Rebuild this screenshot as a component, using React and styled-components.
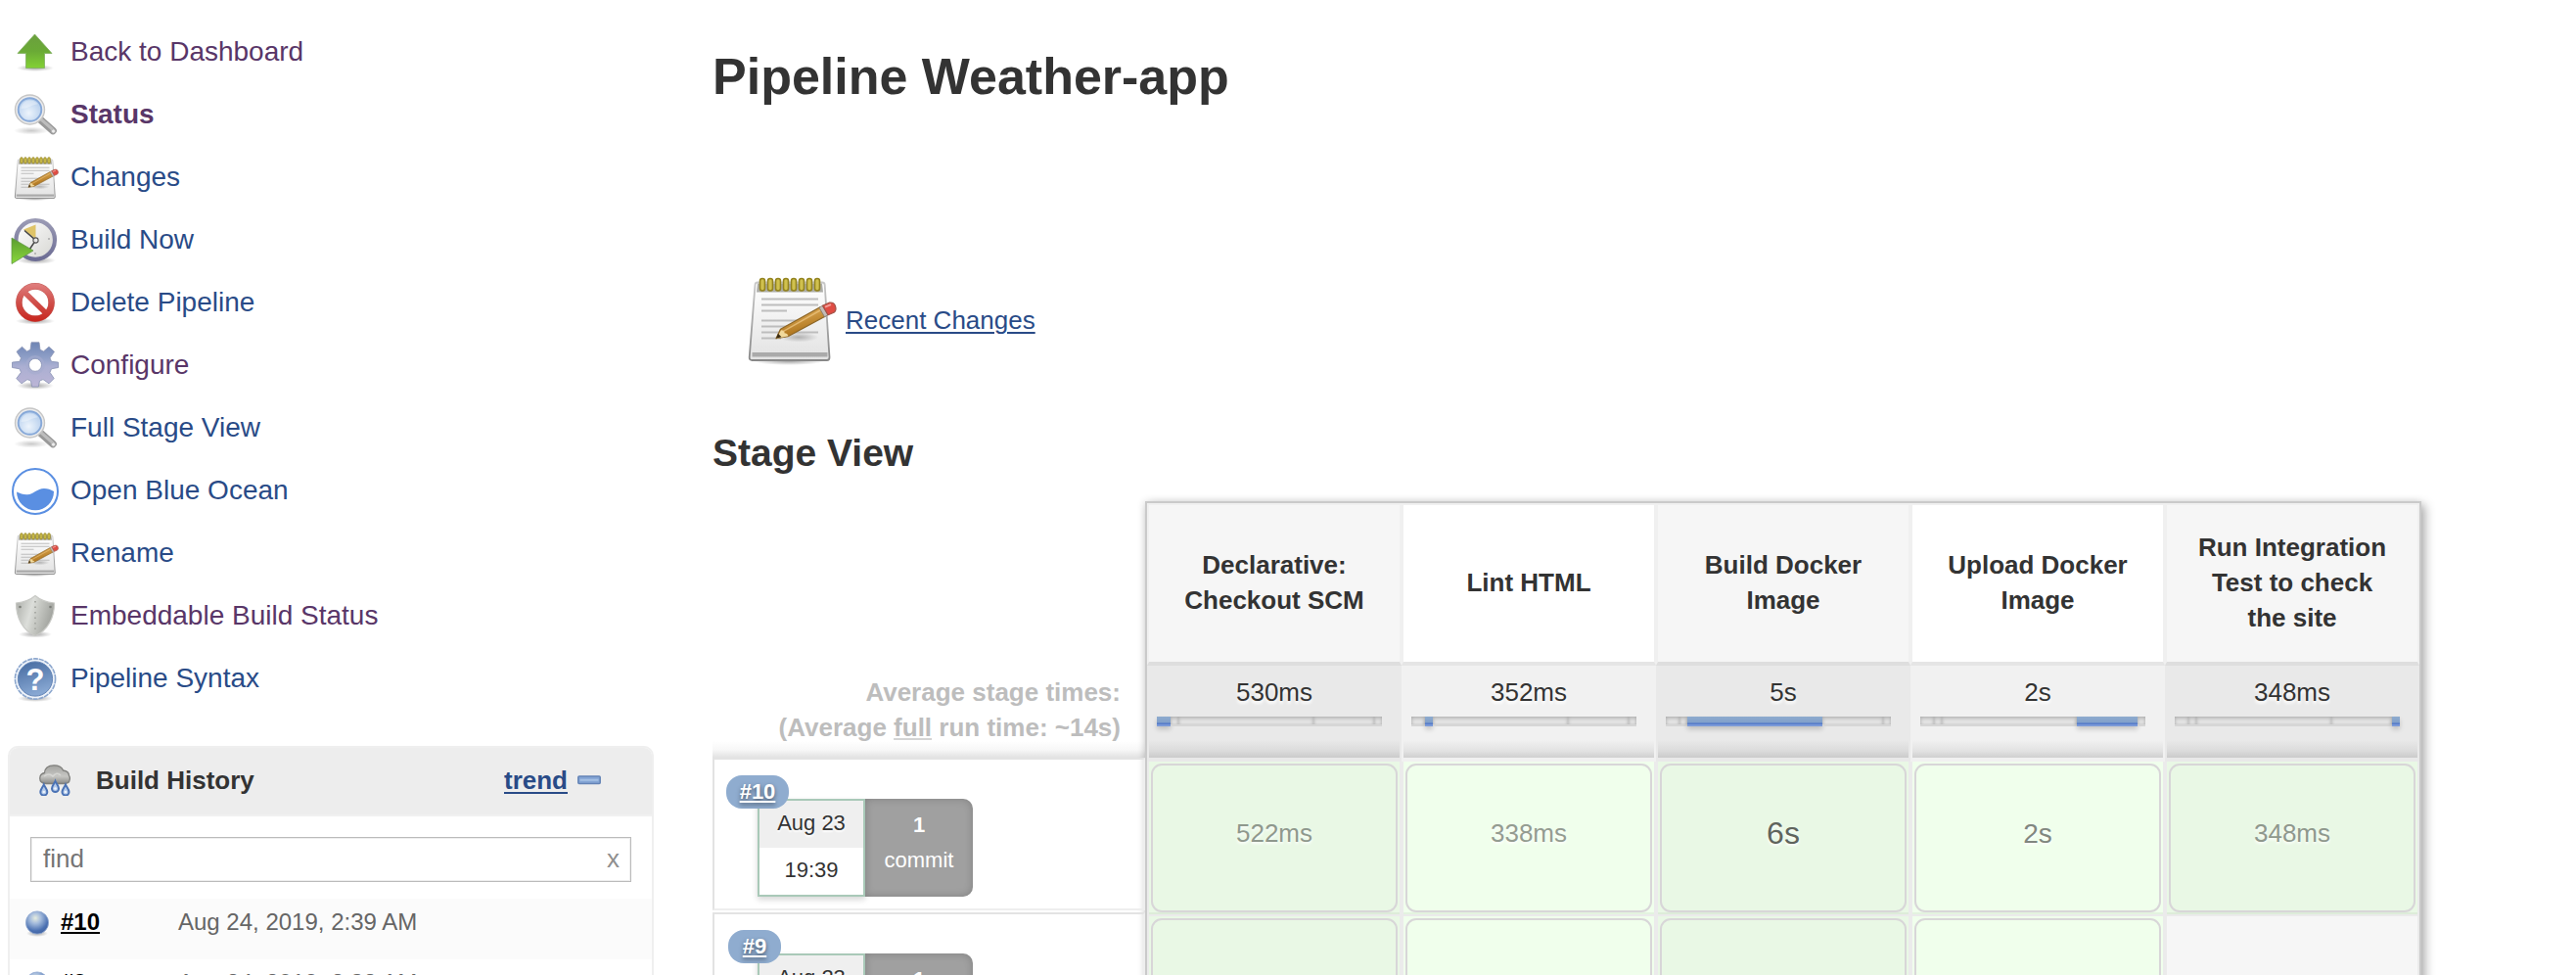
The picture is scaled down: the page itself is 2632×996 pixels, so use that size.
import React from 'react';
import styled, { createGlobalStyle, css } from 'styled-components';

const GlobalStyle = createGlobalStyle`
  html, body { margin: 0; padding: 0; background: #fff; }
  body {
    font-family: "Liberation Sans", Helvetica, Arial, sans-serif;
    color: #333;
    overflow: hidden;
  }
  *, *::before, *::after { box-sizing: border-box; }
`;

/* ---------- layout ---------- */

const Page = styled.div`
  display: flex;
  width: 2632px;
  height: 996px;
  overflow: hidden;
`;

const Sidebar = styled.aside`
  width: 668px;
  flex: none;
  padding: 22px 0 0 8px;
`;

const Main = styled.main`
  flex: 1;
  padding: 48px 0 0 60px;
`;

/* ---------- sidebar tasks ---------- */

const TaskList = styled.nav`
  display: flex;
  flex-direction: column;
  margin-bottom: 36px;
`;

const TaskLink = styled.a`
  display: flex;
  align-items: center;
  gap: 12px;
  height: 64px;
  padding-left: 4px;
  font-size: 28px;
  line-height: 32px;
  font-weight: ${(p) => (p.$current ? 700 : 400)};
  color: ${(p) => (p.$visited ? '#593668' : '#294b87')};
  span { padding-bottom: 3px; }
  svg { display: block; flex: none; overflow: visible; }
`;

/* ---------- build history ---------- */

const HistoryPanel = styled.section`
  width: 660px;
  height: 320px;
  border: 2px solid #efefef;
  border-radius: 10px 10px 0 0;
`;

const HistoryHeader = styled.header`
  display: flex;
  align-items: center;
  height: 70px;
  padding: 0 52px 2px 30px;
  background: #ededed;
  border-bottom: 2px solid #f1f1f1;
  border-radius: 8px 8px 0 0;
  svg { display: block; }
`;

const HistoryTitle = styled.h3`
  flex: 1;
  margin: 0 0 0 26px;
  padding-bottom: 1px;
  font-size: 26px;
  line-height: 32px;
  color: #333;
`;

const TrendLink = styled.a`
  margin-right: 10px;
  font-size: 26px;
  line-height: 32px;
  font-weight: 700;
  color: #294b87;
  text-decoration: underline;
  text-decoration-thickness: 2px;
  text-underline-offset: 3px;
`;

const FindField = styled.div`
  display: flex;
  align-items: center;
  justify-content: space-between;
  width: 614px;
  height: 46px;
  margin: 21px 0 17px 21px;
  padding: 0 11px 1px 12px;
  border: 1px solid #bbb;
  box-shadow: inset 0 0 0 1px #eee;
  font-size: 26px;
  color: #757575;
`;

const ClearMark = styled.span`
  color: #8f8f8f;
`;

const BuildRow = styled.div`
  display: flex;
  align-items: flex-start;
  height: 62px;
  padding: 8px 0 0 16px;
  font-size: 24px;
  line-height: 32px;
  background: ${(p) => (p.$shaded ? '#fbfbfb' : '#fff')};
  svg { display: block; margin-top: 4px; }
`;

const BuildNumber = styled.a`
  width: 120px;
  margin-left: 12px;
  font-weight: 700;
  color: #000;
  text-decoration: underline;
  text-decoration-thickness: 2px;
  text-underline-offset: 2px;
`;

const BuildDate = styled.span`
  color: #666;
`;

/* ---------- main column ---------- */

const PageTitle = styled.h1`
  margin: 0 0 171px;
  font-size: 52px;
  line-height: 60px;
`;

const RecentChanges = styled.div`
  display: flex;
  align-items: center;
  gap: 9px;
  height: 96px;
  margin: 0 0 66px 31px;
  svg { display: block; overflow: visible; }
`;

const ChangesLink = styled.a`
  font-size: 26px;
  line-height: 32px;
  color: #294b87;
  text-decoration: underline;
  text-decoration-thickness: 2px;
  text-underline-offset: 3px;
`;

const SectionTitle = styled.h2`
  margin: 0;
  height: 71px;
  font-size: 39px;
  line-height: 44px;
`;

const StageView = styled.div`
  display: flex;
  height: 600px;
`;

const RunColumn = styled.div`
  width: 442px;
  padding-top: 163px;
`;

const AverageLegend = styled.div`
  height: 99px;
  padding: 14px 25px 0 0;
  text-align: right;
  font-size: 26px;
  line-height: 36px;
  font-weight: 700;
  color: #bdbdbd;
  background: linear-gradient(to top, #e2e2e2, #f7f7f7 8px, #fff 17px) no-repeat;
  u {
    text-decoration-thickness: 2px;
    text-underline-offset: 2px;
    text-decoration-color: #d4d4d4;
  }
`;

const RunRow = styled.div`
  position: relative;
  display: flex;
  height: 156px;
  margin-bottom: 2px;
  padding: 40px 0 0 44px;
  border: 2px solid #e3e3e3;
  border-bottom-color: #eee;
  border-right-color: #eee;
  font-size: 22px;
`;

const RunBadge = styled.a`
  position: absolute;
  left: ${(p) => (p.$narrow ? 14 : 12)}px;
  top: 16px;
  z-index: 1;
  width: ${(p) => (p.$narrow ? 54 : 64)}px;
  height: 34px;
  line-height: 33px;
  border-radius: 16px;
  background: #8faccf;
  color: #fff;
  font-weight: 700;
  text-align: center;
  text-decoration: underline;
  text-decoration-thickness: 2px;
  text-underline-offset: 2px;
  text-shadow: 0 2px 4px rgba(0, 0, 0, 0.5);
`;

const DateCard = styled.div`
  width: 110px;
  height: 100px;
  border: 2px solid #a9c9b8;
  text-align: center;
  line-height: 46px;
  box-shadow: 0 3px 6px rgba(0, 0, 0, 0.16);
`;

const DateDay = styled.div`
  height: 48px;
  background: #efefef;
  text-shadow: 0 2px 2px #fff;
`;

const CommitCard = styled.div`
  width: 110px;
  height: 100px;
  padding-top: 9px;
  border-radius: 0 10px 10px 0;
  background: #a0a0a0;
  box-shadow: inset 0 0 8px rgba(0, 0, 0, 0.2);
  color: #fff;
  text-align: center;
  line-height: 36px;
  b { display: block; }
`;

const StageGrid = styled.div`
  display: grid;
  grid-template-columns: repeat(5, 260px);
  grid-template-rows: 166px 98px 158px 158px;
  width: 1304px;
  height: 590px;
  border: 2px solid #cacaca;
  box-shadow: 4px 4px 10px rgba(0, 0, 0, 0.3), -1px 0 8px rgba(0, 0, 0, 0.1);
`;

const StageName = styled.div`
  display: flex;
  align-items: center;
  justify-content: center;
  padding: 0 20px 2px;
  border: 2px solid #f0f0f0;
  border-bottom: 4px solid ${(p) => (p.$odd ? '#dedede' : '#e5e5e5')};
  background: ${(p) => (p.$odd ? '#f6f6f6' : '#fff')};
  font-size: 26px;
  line-height: 36px;
  font-weight: 700;
  text-align: center;
  white-space: pre-line;
`;

const AverageCell = styled.div`
  padding: 12px 0 0 8px;
  border: 0 solid ${(p) => (p.$odd ? '#e9e9e9' : '#f1f1f1')};
  border-width: 0 2px 4px;
  background: linear-gradient(
    to top,
    ${(p) => (p.$odd ? '#cbcbcb, #dbdbdb 7px, #e9e9e9 18px' : '#d0d0d0, #e2e2e2 7px, #f1f1f1 18px')}
  ) padding-box;
`;

const AverageTime = styled.div`
  height: 40px;
  margin-left: -8px;
  text-align: center;
  font-size: 26px;
  line-height: 30px;
  text-shadow: 0 3px 3px #fff;
`;

const Meter = styled.div`
  display: flex;
  width: 230px;
  height: 10px;
`;

const activeSegment = css`
  background: linear-gradient(#8eabce, #81a0cb 6px, #4f76c6 7px, #5f82cf 8px, #7b9ad8 8px);
  box-shadow: 0 3px 5px rgba(0, 0, 0, 0.18);
`;

const idleSegment = css`
  background: #e6e6e6;
  border-bottom: 2px solid #d6d6d6;
  box-shadow: inset 0 2px 4px rgba(0, 0, 0, 0.2), inset 0 0 3px rgba(0, 0, 0, 0.1);
`;

const MeterSegment = styled.div`
  flex: ${(p) => p.$size} 0 0;
  ${(p) => (p.$active ? activeSegment : idleSegment)}
`;

const StageCell = styled.div`
  padding: 2px 2px 0;
  border: 2px solid #ebebeb;
  border-top: 0;
  background: ${(p) => {
    if (p.$empty) return '#f6f6f6';
    return p.$odd ? '#e9f8e5' : '#f0ffec';
  }};
`;

const CellBox = styled.div`
  display: flex;
  align-items: center;
  justify-content: center;
  height: 152px;
  padding-bottom: 9px;
  border: 2px solid #d8d6d8;
  border-radius: 11px;
  font-size: ${(p) => p.$size}px;
  color: ${(p) => p.$tone};
  text-shadow: 0 2px 3px #fff;
`;

const CellEdge = styled.div`
  height: 2px;
  margin: 0 -2px;
  background: rgba(100, 120, 100, 0.09);
`;

/* ---------- icons ---------- */

const ArrowIcon = () => (
  <svg width="48" height="48" viewBox="0 0 48 48">
    <defs>
      <linearGradient id="arrow" x1="0" y1="0" x2="0" y2="1">
        <stop offset="0" stopColor="#6b9f3e" />
        <stop offset="0.5" stopColor="#6aaa36" />
        <stop offset="1" stopColor="#83d134" />
      </linearGradient>
      <radialGradient id="ground">
        <stop offset="0" stopColor="#000" stopOpacity="0.35" />
        <stop offset="1" stopColor="#000" stopOpacity="0" />
      </radialGradient>
    </defs>
    <ellipse cx="24" cy="39.5" rx="19" ry="3.5" fill="url(#ground)" />
    <path d="M23.500 5 41 24.500h-7.500v15h-19v-15H6Z" fill="url(#arrow)" stroke="#7fae5e" strokeWidth="0.8" strokeLinejoin="round" />
  </svg>
);

const MagnifierIcon = ({ id }) => (
  <svg width="48" height="48" viewBox="0 0 48 48">
    <defs>
      <radialGradient id={id} cx="0.45" cy="0.65" r="0.65">
        <stop offset="0" stopColor="#edf4fc" />
        <stop offset="1" stopColor="#b3cdec" />
      </radialGradient>
    </defs>
    <ellipse cx="20" cy="39.500" rx="18" ry="4" fill="url(#ground)" opacity="0.6" />
    <path d="M29 28 42 39.500" stroke="#999" strokeWidth="7.600" strokeLinecap="round" />
    <path d="M29.500 27.500 42 38.500" stroke="#bdbdbd" strokeWidth="3" strokeLinecap="round" />
    <circle cx="42.500" cy="40" r="2" fill="#eee" stroke="#aaa" strokeWidth="0.7" />
    <circle cx="18.500" cy="18" r="15" fill="#ececec" stroke="#c6c6c6" strokeWidth="1.400" />
    <circle cx="18.500" cy="18" r="11.800" fill={`url(#${id})`} stroke="#86a8d8" strokeWidth="1.900" />
    <path d="M9.500 17c.5-6 5-8.500 9-8.500 4 0 7 2 8 4-5-.5-8 4-17 4.500Z" fill="#fff" opacity="0.35" />
  </svg>
);

const NotepadIcon = ({ size, id }) => (
  <svg width={size} height={size} viewBox="0 0 96 96">
    <defs>
      <linearGradient id={`${id}p`} x1="0" y1="0" x2="0" y2="1">
        <stop offset="0" stopColor="#fff" />
        <stop offset="1" stopColor="#e2e2e2" />
      </linearGradient>
      <linearGradient id={`${id}w`} x1="0" y1="0" x2="0.4" y2="1">
        <stop offset="0.2" stopColor="#e0ad58" />
        <stop offset="0.8" stopColor="#b47b24" />
      </linearGradient>
      <linearGradient id={`${id}e`} x1="0" y1="0" x2="0" y2="1">
        <stop offset="0" stopColor="#c9c9c9" />
        <stop offset="1" stopColor="#888" />
      </linearGradient>
    </defs>
    <ellipse cx="47" cy="90" rx="36" ry="4" fill="url(#ground)" />
    <path d="M15 9.500h66q2.500 0 2.700 2.500L88.500 86q0 3-2.500 3H9.500q-3 0-2.800-3L12.500 12Q12.700 9.500 15 9.500Z" fill={`url(#${id}p)`} stroke={`url(#${id}e)`} strokeWidth="1.800" />
    <path d="M15 10.500h66l1 9H14Z" fill="#adada8" />
    <path d="M9.500 81h77v4.500h-77Z" fill="#aaa" />
    {[0, 1, 2, 3, 4, 5, 6, 7].map((n) => (
      <rect key={n} x={17.5 + n * 8} y="5.500" width="5" height="12.500" rx="2.500" fill="#d0c14e" stroke="#93831e" strokeWidth="1.600" />
    ))}
    <g fill="#bdbdbd">
      <rect x="19" y="25.500" width="58" height="2" />
      <rect x="19" y="31.500" width="58" height="2" />
      <rect x="19" y="37.500" width="26" height="2" />
      <rect x="19" y="47.500" width="50" height="2" />
      <rect x="19" y="53.500" width="45" height="2" />
      <rect x="19" y="59.500" width="58" height="2" />
      <rect x="19" y="65.500" width="20" height="2" />
    </g>
    <ellipse cx="57" cy="65.500" rx="20" ry="5" fill="url(#ground)" opacity="0.7" />
    <g transform="translate(0 1.200)">
      <path d="M34 65.500 38.500 56 79 33.500 84 43 46 63.500Z" fill={`url(#${id}w)`} stroke="#8d6626" strokeWidth="1.300" strokeLinejoin="round" />
      <path d="M39 57q4 0 3.500 3 3 0 4 3L34.500 65.500Z" fill="#f1d99c" />
      <path d="M34 65.500 36 60.500 39.500 64Z" fill="#3a2c14" />
      <path d="M41 58.500 79 37" stroke="#f0c987" strokeWidth="1.500" opacity="0.7" />
      <path d="M78 34 81.500 32 87 41.500 83.500 43.500Z" fill="#c3bcb8" stroke="#857a6c" strokeWidth="0.8" />
      <path d="M81.500 32 88 29q5-1 6.500 3.500t-1.500 6.500L87 41.500Z" fill="#e04c43" stroke="#a05348" strokeWidth="1.200" />
      <path d="M84 33.500 90 31" stroke="#f3a19a" strokeWidth="2" />
    </g>
  </svg>
);

const ClockIcon = () => (
  <svg width="48" height="48" viewBox="0 0 48 48">
    <defs>
      <linearGradient id="face" x1="0" y1="0" x2="1" y2="1">
        <stop offset="0" stopColor="#fff" />
        <stop offset="1" stopColor="#d6d6d2" />
      </linearGradient>
      <linearGradient id="rim" x1="0" y1="0" x2="0" y2="1">
        <stop offset="0" stopColor="#9a9ab4" />
        <stop offset="1" stopColor="#6c6c94" />
      </linearGradient>
      <linearGradient id="play" x1="0" y1="0" x2="0" y2="1">
        <stop offset="0" stopColor="#5b9c2f" />
        <stop offset="1" stopColor="#8ad83b" />
      </linearGradient>
    </defs>
    <ellipse cx="25" cy="44" rx="20" ry="4" fill="url(#ground)" />
    <circle cx="24.200" cy="23" r="19.800" fill="url(#face)" stroke="url(#rim)" strokeWidth="4.200" />
    <path d="M12 12.500 24.500 7.500V22Z" fill="#dfc468" />
    <path d="M13 13.500 24.500 23.500 18 33" fill="none" stroke="#444" strokeWidth="1.500" />
    <circle cx="24.500" cy="23.500" r="2.600" fill="#e6e6e6" stroke="#555" strokeWidth="1.100" />
    <circle cx="38" cy="22" r="1" fill="#aaa" />
    <circle cx="24" cy="37" r="1" fill="#aaa" />
    <path d="M0 21 22 34 0 47.500Z" fill="url(#play)" stroke="#64994a" strokeWidth="0.800" />
  </svg>
);

const ForbiddenIcon = () => (
  <svg width="48" height="48" viewBox="0 0 48 48">
    <defs>
      <linearGradient id="stop" gradientUnits="userSpaceOnUse" x1="0" y1="3" x2="0" y2="43">
        <stop offset="0" stopColor="#e08080" />
        <stop offset="0.5" stopColor="#d04f4a" />
        <stop offset="1" stopColor="#c8241c" />
      </linearGradient>
    </defs>
    <ellipse cx="24" cy="42" rx="20" ry="3.500" fill="url(#ground)" />
    <circle cx="24" cy="23" r="16.600" fill="#fff" stroke="#c4605b" strokeWidth="6.600" />
    <circle cx="24" cy="23" r="16.600" fill="none" stroke="url(#stop)" strokeWidth="5.600" />
    <path d="M12.500 12 35.500 34.500" stroke="url(#stop)" strokeWidth="5.500" />
  </svg>
);

const GearIcon = () => (
  <svg width="48" height="48" viewBox="0 0 48 48">
    <defs>
      <linearGradient id="gear" gradientUnits="userSpaceOnUse" x1="0" y1="0" x2="0" y2="46">
        <stop offset="0" stopColor="#6d84b4" />
        <stop offset="0.35" stopColor="#8f9fc7" />
        <stop offset="0.55" stopColor="#abafd2" />
        <stop offset="1" stopColor="#bcb5d6" />
      </linearGradient>
    </defs>
    <ellipse cx="24" cy="44" rx="19" ry="4" fill="url(#ground)" />
    <g transform="translate(0 -0.700)">
      <path d="M20 0.500h8l1 7.500 3.500 1.600L38 5l5.500 5-4.500 6.500 1.500 3.500 7 .8v5.400l-7 1.300-1.500 3.600 4.200 6.200-5.200 5.200-6-4.200-3.500 1.500-1.200 6h-6.600l-1.200-6-3.500-1.500-6 4.200-5.200-5.200L9.500 31 8 27.500.5 26.200v-5.400L8 20l1.500-3.500L5 10l5.500-5 5 4.600L19 8ZM24 17a6.500 6.500 0 1 0 0 13 6.500 6.500 0 0 0 0-13Z" fillRule="evenodd" fill="url(#gear)" stroke="#8790b2" strokeWidth="0.8" />
      <circle cx="24" cy="23.500" r="8.500" fill="none" stroke="#a5accf" strokeWidth="2.500" opacity="0.6" />
    </g>
  </svg>
);

const OceanIcon = () => (
  <svg width="48" height="48" viewBox="0 0 48 48">
    <circle cx="24" cy="24" r="23" fill="#fff" stroke="#5a8fe2" strokeWidth="2" />
    <path d="M5 24.500c4 1.500 6.500 3 11 2.800 6-.3 10-6.300 17-6.300 4 0 6.500 1.200 10 3a19 19 0 0 1-38 .5Z" fill="#5a8fe2" />
  </svg>
);

const ShieldIcon = () => (
  <svg width="48" height="48" viewBox="0 0 48 48">
    <defs>
      <linearGradient id="shield" x1="0" y1="0" x2="1" y2="0.3">
        <stop offset="0" stopColor="#a9aba6" />
        <stop offset="0.45" stopColor="#dcdeda" />
        <stop offset="0.6" stopColor="#cbcdc8" />
        <stop offset="1" stopColor="#a2a49f" />
      </linearGradient>
    </defs>
    <ellipse cx="24" cy="42" rx="17" ry="3.500" fill="url(#ground)" />
    <path d="M24 2.500C28 6 34 9 43.500 10 43.500 25 37 38 24 43.500 11 38 4.500 25 4.500 10 14 9 20 6 24 2.500Z" fill="url(#shield)" stroke="#c9cac6" strokeWidth="1.200" />
    <path d="M24 8V38" stroke="#a9aba6" strokeWidth="2" strokeDasharray="1.500 4" />
    <circle cx="8.500" cy="14" r="1.300" fill="#7c7e79" />
    <circle cx="39.500" cy="14" r="1.300" fill="#7c7e79" />
  </svg>
);

const HelpIcon = () => (
  <svg width="48" height="48" viewBox="0 0 48 48">
    <defs>
      <linearGradient id="help" x1="0" y1="0" x2="0.3" y2="1">
        <stop offset="0" stopColor="#44699f" />
        <stop offset="1" stopColor="#87a7d2" />
      </linearGradient>
    </defs>
    <ellipse cx="24" cy="43.500" rx="18" ry="3.500" fill="url(#ground)" />
    <circle cx="24" cy="23.500" r="20.600" fill="#eef3fa" stroke="#8ba6cd" strokeWidth="1.600" strokeDasharray="5 0.900" />
    <circle cx="24" cy="23.500" r="17.600" fill="url(#help)" stroke="#6485b6" strokeWidth="1" />
    <text x="24" y="34.500" fontSize="31" fontWeight="700" textAnchor="middle" fill="#fff" fontFamily="Liberation Sans, sans-serif">?</text>
  </svg>
);

const DROP = 'M0-5.500C1 -3 3.500-.5 3.500 2A3.500 3.500 0 0 1-3.500 2C-3.500-.5-1-3 0-5.500Z';

const RainIcon = () => (
  <svg width="32" height="32" viewBox="0 0 32 32">
    <defs>
      <linearGradient id="cloud" x1="0" y1="0" x2="0" y2="1">
        <stop offset="0" stopColor="#a3a3a0" />
        <stop offset="0.6" stopColor="#c6c6c3" />
        <stop offset="1" stopColor="#8a8a87" />
      </linearGradient>
    </defs>
    <path d="M7 19.500C2.500 19.500.5 17 .8 13.500 1 10.500 3.500 9 5.500 8.500 5.500 4 9 .8 15 .8c5 0 8.500 2 9.500 5.200 4 .5 6 2.500 6 5.500 1 1 1 2.500.7 4-.3 3-2.500 4-5.500 4Z" fill="url(#cloud)" stroke="#80807d" strokeWidth="1.300" />
    <path d="M5 12q5-4 9 0 4-5 8-1" fill="none" stroke="#e4e4e1" strokeWidth="1.600" opacity="0.6" />
    {[[4.8, 26], [16.5, 22.5], [27, 26]].map(([x, y]) => (
      <g key={x} transform={`translate(${x} ${y})`}>
        <path d={DROP} fill="#b5cbea" stroke="#4a72b5" strokeWidth="2" />
        <circle cy="2" r="1.300" fill="#eef4fc" />
      </g>
    ))}
  </svg>
);

const CollapseIcon = () => (
  <svg width="24" height="10" viewBox="0 0 24 10">
    <rect x="0.800" y="1" width="22.400" height="7.600" rx="1" fill="#84a5d5" stroke="#6484b6" strokeWidth="1.500" />
    <path d="M2.500 4.800h19" stroke="#a3bfe4" strokeWidth="2" />
  </svg>
);

const BallIcon = ({ id }) => (
  <svg width="24" height="28" viewBox="0 0 24 28">
    <defs>
      <radialGradient id={id} cx="0.42" cy="0.3" r="0.7">
        <stop offset="0" stopColor="#e6ecdf" />
        <stop offset="0.35" stopColor="#a4bbdc" />
        <stop offset="0.8" stopColor="#4b71b2" />
        <stop offset="1" stopColor="#4364a3" />
      </radialGradient>
    </defs>
    <ellipse cx="12" cy="23.500" rx="11" ry="3.500" fill="url(#ground)" />
    <circle cx="12" cy="12.500" r="11.600" fill={`url(#${id})`} stroke="#93abd2" strokeWidth="0.800" />
  </svg>
);

/* ---------- data ---------- */

const tasks = [
  { label: 'Back to Dashboard', icon: <ArrowIcon />, visited: true },
  { label: 'Status', icon: <MagnifierIcon id="lensA" />, visited: true, current: true },
  { label: 'Changes', icon: <NotepadIcon size={48} id="padA" /> },
  { label: 'Build Now', icon: <ClockIcon /> },
  { label: 'Delete Pipeline', icon: <ForbiddenIcon /> },
  { label: 'Configure', icon: <GearIcon />, visited: true },
  { label: 'Full Stage View', icon: <MagnifierIcon id="lensB" /> },
  { label: 'Open Blue Ocean', icon: <OceanIcon /> },
  { label: 'Rename', icon: <NotepadIcon size={48} id="padB" /> },
  { label: 'Embeddable Build Status', icon: <ShieldIcon />, visited: true },
  { label: 'Pipeline Syntax', icon: <HelpIcon /> },
];

const builds = [
  { number: '#10', date: 'Aug 24, 2019, 2:39 AM' },
  { number: '#9', date: 'Aug 24, 2019, 2:38 AM' },
];

const stages = [
  { name: 'Declarative:\nCheckout SCM', average: '530ms' },
  { name: 'Lint HTML', average: '352ms' },
  { name: 'Build Docker\nImage', average: '5s' },
  { name: 'Upload Docker\nImage', average: '2s' },
  { name: 'Run Integration\nTest to check\nthe site', average: '348ms' },
];

const segmentSizes = [14, 8, 138, 62, 8];

const runs = [
  {
    number: '#10',
    day: 'Aug 23',
    time: '19:39',
    cells: [
      { text: '522ms', size: 26, tone: '#8f988d' },
      { text: '338ms', size: 26, tone: '#949c91' },
      { text: '6s', size: 32, tone: '#5f645d' },
      { text: '2s', size: 28, tone: '#818780' },
      { text: '348ms', size: 26, tone: '#8f988d' },
    ],
  },
  {
    number: '#9',
    day: 'Aug 23',
    time: '19:38',
    cells: [{}, {}, {}, {}, null],
  },
];

/* ---------- page ---------- */

export default function App() {
  return (
    <Page>
      <GlobalStyle />
      <Sidebar>
        <TaskList>
          {tasks.map((t) => (
            <TaskLink key={t.label} $visited={t.visited} $current={t.current}>
              {t.icon}
              <span>{t.label}</span>
            </TaskLink>
          ))}
        </TaskList>
        <HistoryPanel>
          <HistoryHeader>
            <RainIcon />
            <HistoryTitle>Build History</HistoryTitle>
            <TrendLink>trend</TrendLink>
            <CollapseIcon />
          </HistoryHeader>
          <FindField>
            <span>find</span>
            <ClearMark>x</ClearMark>
          </FindField>
          {builds.map((b, i) => (
            <BuildRow key={b.number} $shaded={i % 2 === 0}>
              <BallIcon id={`ball${i}`} />
              <BuildNumber>{b.number}</BuildNumber>
              <BuildDate>{b.date}</BuildDate>
            </BuildRow>
          ))}
        </HistoryPanel>
      </Sidebar>
      <Main>
        <PageTitle>Pipeline Weather-app</PageTitle>
        <RecentChanges>
          <NotepadIcon size={96} id="padC" />
          <ChangesLink>Recent Changes</ChangesLink>
        </RecentChanges>
        <SectionTitle>Stage View</SectionTitle>
        <StageView>
          <RunColumn>
            <AverageLegend>
              Average stage times:
              <br />
              (Average <u>full</u> run time: ~14s)
            </AverageLegend>
            {runs.map((r) => (
              <RunRow key={r.number}>
                <RunBadge $narrow={r.number.length < 3}>{r.number}</RunBadge>
                <DateCard>
                  <DateDay>{r.day}</DateDay>
                  {r.time}
                </DateCard>
                <CommitCard>
                  <b>1</b>
                  commit
                </CommitCard>
              </RunRow>
            ))}
          </RunColumn>
          <StageGrid>
            {stages.map((s, i) => (
              <StageName key={s.name} $odd={i % 2 === 0}>{s.name}</StageName>
            ))}
            {stages.map((s, i) => (
              <AverageCell key={s.name} $odd={i % 2 === 0}>
                <AverageTime>{s.average}</AverageTime>
                <Meter>
                  {segmentSizes.map((size, n) => (
                    <MeterSegment key={n} $size={size} $active={n === i} />
                  ))}
                </Meter>
              </AverageCell>
            ))}
            {runs.map((r) =>
              r.cells.map((c, i) => (
                <StageCell key={`${r.number}-${i}`} $odd={i % 2 === 0} $empty={!c}>
                  {c && (
                    <>
                      <CellBox $size={c.size || 26} $tone={c.tone}>{c.text}</CellBox>
                      <CellEdge />
                    </>
                  )}
                </StageCell>
              ))
            )}
          </StageGrid>
        </StageView>
      </Main>
    </Page>
  );
}
